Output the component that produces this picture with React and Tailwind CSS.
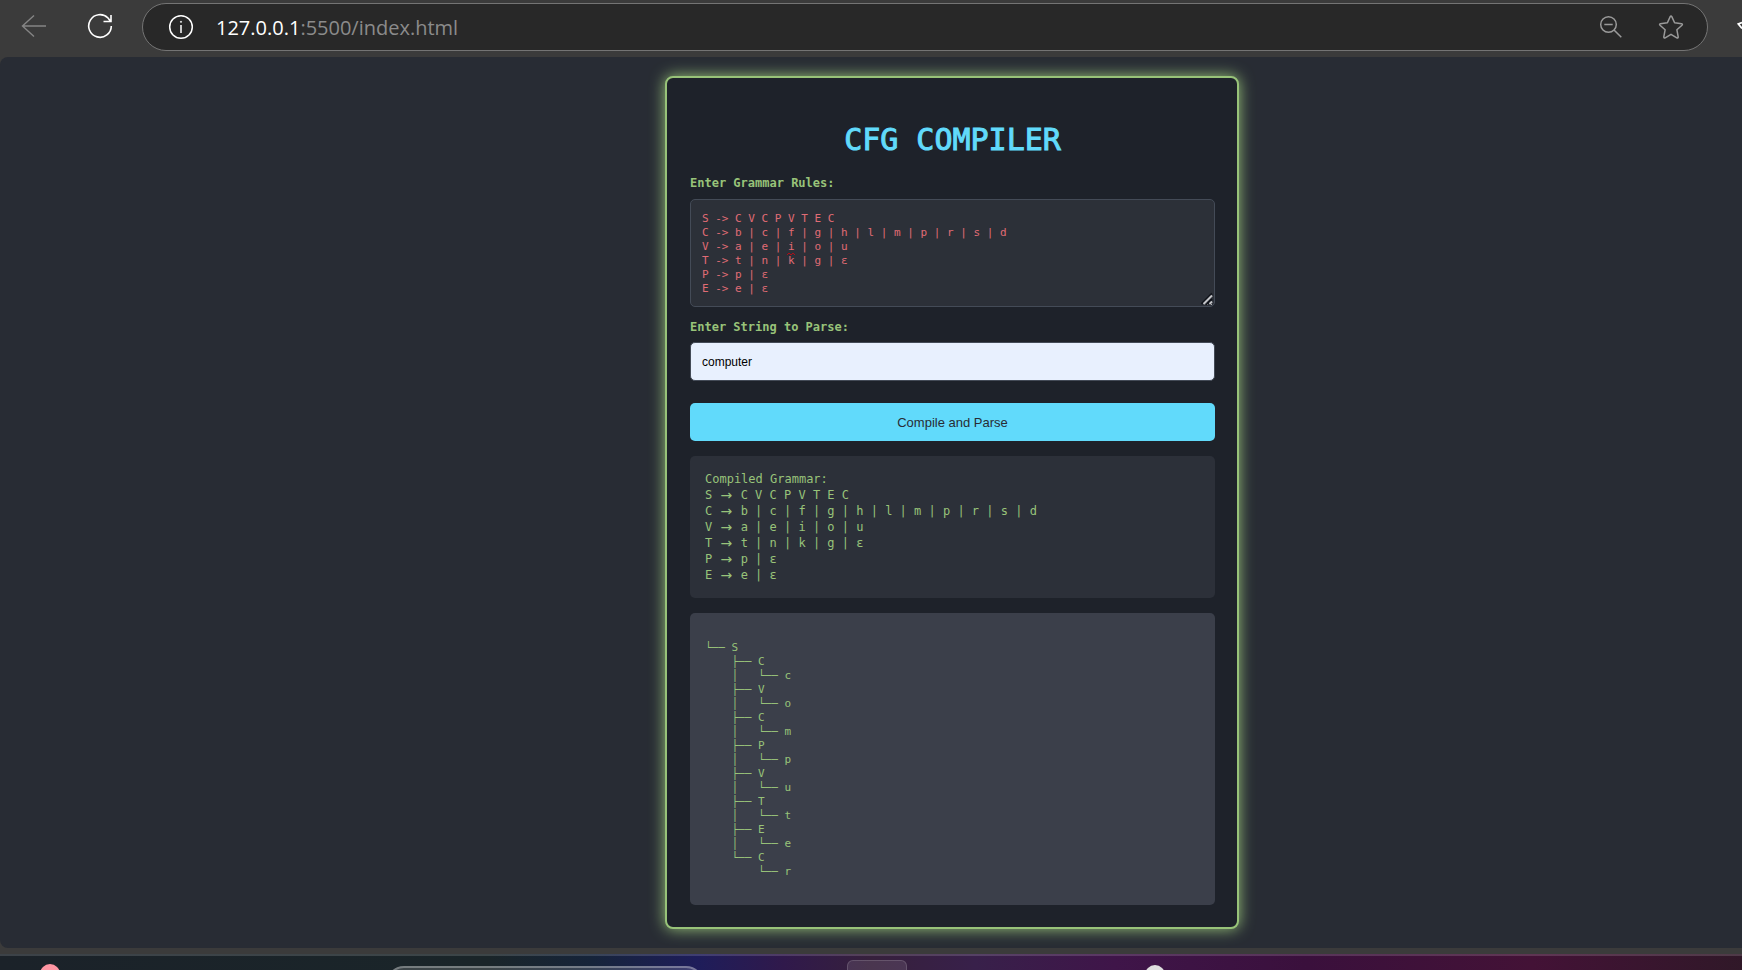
const rules = [
  ["S", "C V C P V T E C"],
  ["C", "b | c | f | g | h | l | m | p | r | s | d"],
  ["V", "a | e | i | o | u"],
  ["T", "t | n | k | g | ε"],
  ["P", "p | ε"],
  ["E", "e | ε"],
];

const source = rules.map(([left, right]) => `${left} -> ${right}`).join("\n");

const tree = `└── S
    ├── C
    │   └── c
    ├── V
    │   └── o
    ├── C
    │   └── m
    ├── P
    │   └── p
    ├── V
    │   └── u
    ├── T
    │   └── t
    ├── E
    │   └── e
    └── C
        └── r`;

function BrowserBar() {
  return (
    <header className="flex h-[57px] items-start overflow-hidden bg-[#3b3b3b] pt-[3px] pl-[21px]">
      <button type="button" aria-label="Back" className="mt-[10px] text-[#858585]">
        <svg width="26" height="26" viewBox="0 0 26 26" fill="none" stroke="currentColor" strokeWidth="1.4">
          <path d="M25 13H1.5M13 2.5L1.5 13L13 23.5" />
        </svg>
      </button>
      <button type="button" aria-label="Reload" className="mt-[10px] ml-[40px] text-white">
        <svg width="26" height="26" viewBox="0 0 26 26" fill="none" stroke="currentColor" strokeWidth="1.6">
          <path d="M24.3 13A11.3 11.3 0 1 1 21 5L23.5 8.3M24 2V8.5H16.5" />
        </svg>
      </button>
      <div className="ml-[29px] flex h-12 flex-1 items-center rounded-full border border-[#747474] bg-[#282828] pr-[23px] pl-[25px]">
        <svg width="26" height="26" viewBox="0 0 26 26" fill="none" stroke="#fff" strokeWidth="1.5">
          <circle cx="13" cy="13" r="11.3" />
          <path d="M13 11V19" />
          <circle cx="13" cy="7.8" r="0.6" fill="#fff" strokeWidth="0.8" />
        </svg>
        <a
          href="http://127.0.0.1:5500/index.html"
          className="ml-[22px] pt-0.5 font-['Open_Sans',sans-serif] text-[20px] leading-7 text-[#8b8b8b]"
        >
          <span className="text-white">127.0.0.1</span>:5500/index.html
        </a>
        <button type="button" aria-label="Zoom out" className="ml-auto text-[#9a9a9a]">
          <svg width="24" height="24" viewBox="0 0 24 24" fill="none" stroke="currentColor" strokeWidth="1.5">
            <circle cx="9.5" cy="9.5" r="7.8" />
            <path d="M5.3 9.5H13.7M15 15L22.3 22.3" />
          </svg>
        </button>
        <button type="button" aria-label="Add to favorites" className="ml-[35px] text-[#9a9a9a]">
          <svg width="26" height="26" viewBox="0 0 26 26" fill="none" stroke="currentColor" strokeWidth="1.5" strokeLinejoin="round">
            <path d="M12.2 2.6Q13 1.2 13.8 2.6L16.6 8.8L23.6 9.7Q25 10.1 24 11.2L18.9 15.8L20.2 22.9Q20.2 24.3 18.8 23.8L13 20.3L7.2 23.8Q5.8 24.3 5.8 22.9L7.1 15.8L2 11.2Q1 10.1 2.4 9.7L9.4 8.8Z" />
          </svg>
        </button>
      </div>
      <div className="flex w-[34px] justify-end pt-[18px]">
        <svg width="5" height="9" viewBox="0 0 5 9" fill="none" stroke="#fff" strokeWidth="1.8">
          <path d="M5 1.5L1.4 3L5 7.5" />
        </svg>
      </div>
    </header>
  );
}

function Taskbar() {
  return (
    <footer className="h-4 bg-[linear-gradient(to_right,#1b2229_0%,#1a2529_28%,#16243a_34%,#1e1d5a_40%,#30194b_45%,#36203c_50%,#38204a_56%,#3f1549_64%,#3a103c_75%,#431236_88%,#301828_100%)]">
      <div className="h-0.5 bg-white/15" />
      <div className="flex h-[14px] items-end overflow-hidden">
        <div className="ml-[40px] h-1.5 w-5 overflow-hidden">
          <div className="size-5 rounded-full bg-[#ff96a3]" />
        </div>
        <div className="ml-[326px] h-1 w-[318px] overflow-hidden">
          <div className="h-9 rounded-full border-2 border-white/30 bg-white/15" />
        </div>
        <div className="ml-[143px] h-[10px] w-[60px] rounded-t-md border border-b-0 border-white/15 bg-white/10" />
        <div className="ml-[238px] h-[5px] w-5 overflow-hidden">
          <div className="size-5 rounded-full bg-[#dedede]" />
        </div>
      </div>
    </footer>
  );
}

export default function App() {
  return (
    <div className="flex min-h-screen flex-col bg-[#3b3b3b] font-['DejaVu_Sans_Mono',monospace]">
      <BrowserBar />
      <main className="flex flex-1 justify-center rounded-l-lg bg-[#282c34] pt-[19px] pb-[19px] pl-[162px]">
        <form className="flex w-full max-w-[574px] flex-col rounded-lg border-2 border-[#98c379] bg-[#1e222a] pt-[44px] pr-[22px] pb-[22px] pl-[23px] shadow-[0_0_15px_#98c379]">
          <h1 className="text-center text-[30px] leading-9 text-[#61dafb] [-webkit-text-stroke:1px_#61dafb]">CFG COMPILER</h1>
          <label htmlFor="grammar" className="mt-[17px] text-[12px] leading-4 font-bold text-[#98c379]">
            Enter Grammar Rules:
          </label>
          <div className="relative mt-2 flex">
            <textarea
              id="grammar"
              spellCheck={false}
              defaultValue={source}
              className="h-[108px] w-full resize overflow-hidden rounded-[5px] border border-[#444b57] bg-[#2c3038] px-[11px] pt-3 pb-[10px] text-[11px] leading-[14px] text-[#e06c75] outline-none"
            />
            <svg className="pointer-events-none absolute top-[53px] left-[97px]" width="8" height="4" viewBox="0 0 8 4" fill="none" stroke="#b00d17" strokeWidth="1">
              <path d="M0 3L2 1L4 3L6 1L8 3" />
            </svg>
            <svg className="pointer-events-none absolute right-0.5 bottom-0.5" width="13" height="13" viewBox="0 0 13 13" fill="none">
              <rect x="3" y="3" width="10" height="9" fill="#2c3038" />
              <path d="M1.5 12L12 1.5M7 12L12 7" stroke="#10131a" strokeWidth="2" />
              <path d="M3.5 12L12 3.5M9.5 12L12 9.5" stroke="#c4c5c8" strokeWidth="2" />
            </svg>
          </div>
          <label htmlFor="word" className="mt-3 text-[12px] leading-4 font-bold text-[#98c379]">
            Enter String to Parse:
          </label>
          <input
            id="word"
            type="text"
            defaultValue="computer"
            className="mt-[7px] h-[39px] rounded-[5px] border border-[#444b57] bg-[#e8f0fe] px-[11px] font-['Liberation_Sans',sans-serif] text-[12px] text-black outline-none"
          />
          <button
            type="button"
            className="mt-[22px] h-[38px] rounded-[5px] bg-[#61dafb] pt-0.5 font-['Liberation_Sans',sans-serif] text-[13px] text-[#282c34]"
          >
            Compile and Parse
          </button>
          <output htmlFor="grammar" className="mt-[15px] block rounded-[5px] bg-[#2c3039] p-[15px] text-[12px] leading-4 text-[#98c379]">
            <p>Compiled Grammar:</p>
            {rules.map(([left, right]) => (
              <p key={left} className="flex h-4 items-center gap-[1ch]">
                <span>{left}</span>
                <span className="flex w-[14px] justify-center font-['DejaVu_Sans',sans-serif] text-[14px] leading-none">→</span>
                <span>{right}</span>
              </p>
            ))}
          </output>
          <pre className="mt-[15px] rounded-[5px] bg-[#3b3f4a] px-[15px] pt-7 pb-[26px] font-['DejaVu_Sans_Mono',monospace] text-[11px] leading-[14px] text-[#98c379]">
            {tree}
          </pre>
        </form>
      </main>
      <div className="h-1.5 bg-[#3b3b3b]" />
      <Taskbar />
    </div>
  );
}
